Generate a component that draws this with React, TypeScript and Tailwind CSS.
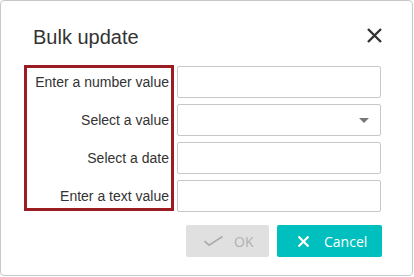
import React from "react";

const labels = ["Enter a number value", "Select a value", "Select a date", "Enter a text value"];

function CloseIcon({ className }: { className?: string }) {
  return (
    <svg viewBox="0 0 15 15" className={className} fill="none" stroke="currentColor" strokeWidth="2.4">
      <path d="M1 1L14 14M14 1L1 14" />
    </svg>
  );
}

export default function App() {
  return (
    <div className="w-[414px] h-[277px] bg-white font-['Liberation_Sans',Arial,sans-serif] text-[#333333]">
      <div className="w-[413px] h-[276px] border border-[#c8c8c8] rounded-[4px] bg-white flex flex-col">
        {/* Header */}
        <div className="flex items-start justify-between pt-[25px] pl-[32px] pr-[30px]">
          <h1 className="text-[20px] leading-[23px] font-normal">Bulk update</h1>
          <CloseIcon className="w-[15px] h-[15px] mt-[2px] text-[#333333]" />
        </div>

        {/* Fields */}
        <div className="flex items-start pl-[23px] mt-[16px]">
          <div className="w-[150px] h-[146px] border-[3px] border-[#9c1c24] flex flex-col">
            <div className="-mt-[2px] flex flex-col gap-[6px] pr-[2px]">
              {labels.map((l) => (
                <div key={l} className="h-[32px] flex items-center justify-end text-[14px] whitespace-nowrap">
                  {l}
                </div>
              ))}
            </div>
          </div>
          <div className="ml-[3px] mt-[1px] flex flex-col gap-[6px]">
            <div className="w-[204px] h-[32px] border border-[#c8c8c8] rounded-[2px]" />
            <div className="w-[204px] h-[32px] border border-[#c8c8c8] rounded-[2px] flex items-center justify-end pr-[11px]">
              <svg viewBox="0 0 10 5" className="w-[10px] h-[5px]">
                <path d="M0 0H10L5 5Z" fill="#777777" />
              </svg>
            </div>
            <div className="w-[204px] h-[32px] border border-[#c8c8c8] rounded-[2px]" />
            <div className="w-[204px] h-[32px] border border-[#c8c8c8] rounded-[2px]" />
          </div>
        </div>

        {/* Footer */}
        <div className="flex justify-end gap-[8px] pr-[30px] mt-[13px] font-['Open_Sans',sans-serif] text-[14px]">
          <button className="w-[83px] h-[32px] rounded-[2px] bg-[#e0e0e0] text-[#b0b0b0] flex items-center pl-[18px]">
            <svg viewBox="0 0 19 10" className="w-[19px] h-[10px]" fill="none" stroke="#aaaaaa" strokeWidth="1.6">
              <path d="M0.5 5L5 9.2L18.5 0.5" />
            </svg>
            <span className="ml-[11px]">OK</span>
          </button>
          <button className="w-[105px] h-[32px] rounded-[2px] bg-[#00bfbf] text-white flex items-center pl-[21px]">
            <svg viewBox="0 0 11 11" className="w-[11px] h-[11px]" fill="none" stroke="white" strokeWidth="2.2">
              <path d="M0.5 0.5L10.5 10.5M10.5 0.5L0.5 10.5" />
            </svg>
            <span className="ml-[15px]">Cancel</span>
          </button>
        </div>
      </div>
    </div>
  );
}
